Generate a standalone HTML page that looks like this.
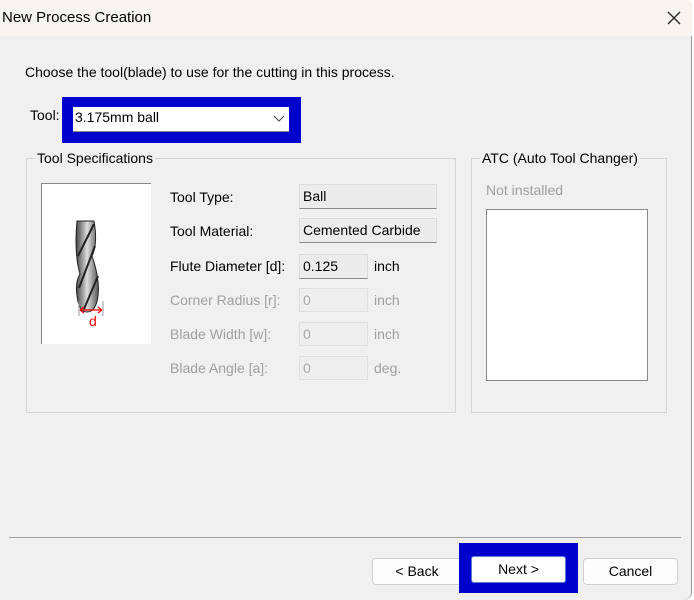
<!DOCTYPE html>
<html><head><meta charset="utf-8"><style>
*{margin:0;padding:0;box-sizing:border-box}
body{width:694px;height:600px;background:#fff;font-family:"Liberation Sans",sans-serif;font-size:14px;color:#000;position:relative;overflow:hidden;letter-spacing:0}
.win{position:absolute;left:0;top:0;width:692px;height:600px;background:#f0f0f0;border-right:1px solid #9a9a9a;border-radius:0 8px 8px 0}
.title{position:absolute;left:0;top:0;width:692px;height:36px;background:#f8f4f1;border-radius:0 8px 0 0}
.a{position:absolute;white-space:nowrap}
.grp{position:absolute;border:1px solid #d6d6d6}
.lbl{position:absolute;background:#f0f0f0;padding:0 2px;top:-9px;left:8px}
.f{position:absolute;background:#ececec;border:1px solid #dcdcdc;border-bottom:1px solid #8a8a8a;padding:3px 0 0 3px}
.fd{position:absolute;background:#efefef;border:1px solid #e0e0e0;color:#a8a8a8;padding:3px 0 0 3px}
.g{color:#a0a0a0}
.btn{position:absolute;background:#fdfdfd;border:1px solid #d0d0d0;border-radius:4px;text-align:center;line-height:25px;height:27px}
</style></head><body>
<div class="win">
<div class="title"><div class="a" style="left:2px;top:9px;font-size:15px">New Process Creation</div>
<svg class="a" style="left:667px;top:11px" width="14" height="14"><path d="M1 1L13 13M13 1L1 13" stroke="#222" stroke-width="1.3"/></svg></div>
<div class="a" style="left:25px;top:64px">Choose the tool(blade) to use for the cutting in this process.</div>
<div class="a" style="left:30px;top:107px">Tool:</div>
<div class="a" style="left:62px;top:97px;width:239px;height:46px;background:#0000cc"></div>
<div class="a" style="left:73px;top:107px;width:216px;height:25px;background:#fff;border-bottom:1px solid #888;padding:2px 0 0 2px">3.175mm ball
<svg class="a" style="left:200px;top:8px" width="12" height="8"><path d="M1 1L6 6L11 1" stroke="#555" fill="none" stroke-width="1.2"/></svg></div>

<div class="grp" style="left:26px;top:158px;width:430px;height:255px"><div class="lbl">Tool Specifications</div></div>
<div class="a" style="left:41px;top:183px;width:110px;height:161px;background:#fff;border-left:1px solid #888;border-top:1px solid #888">
<svg width="110" height="160" style="position:absolute;left:0;top:0">
<defs><linearGradient id="gr" x1="0" x2="1"><stop offset="0" stop-color="#444"/><stop offset="0.5" stop-color="#ddd"/><stop offset="1" stop-color="#555"/></linearGradient></defs>
<path d="M35 37H52Q56 60 50 72Q58 95 56 112Q54 128 45 128Q37 128 35 112Q33 98 38 90Q32 70 35 37Z" fill="url(#gr)" stroke="#222" stroke-width="1"/>
<path d="M52 40L36 72M53 62L37 104M56 92L42 125" stroke="#222" stroke-width="2" fill="none"/>
<path d="M37 117V132M61 117V132" stroke="#999"/>
<path d="M38 126H60M38 126l4-3M38 126l4 3M60 126l-4-3M60 126l-4 3" stroke="#e00" stroke-width="1.3" fill="none"/>
<text x="47" y="142" fill="#e00" font-size="14" font-family="Liberation Sans">d</text></svg></div>

<div class="a" style="left:170px;top:189px">Tool Type:</div>
<div class="a" style="left:170px;top:223px">Tool Material:</div>
<div class="a" style="left:170px;top:258px">Flute Diameter [d]:</div>
<div class="a g" style="left:170px;top:292px">Corner Radius [r]:</div>
<div class="a g" style="left:170px;top:326px">Blade Width [w]:</div>
<div class="a g" style="left:170px;top:360px">Blade Angle [a]:</div>
<div class="f" style="left:299px;top:184px;width:138px;height:25px">Ball</div>
<div class="f" style="left:299px;top:218px;width:138px;height:25px">Cemented Carbide</div>
<div class="f" style="left:299px;top:254px;width:69px;height:25px">0.125</div>
<div class="fd" style="left:299px;top:288px;width:69px;height:24px">0</div>
<div class="fd" style="left:299px;top:322px;width:69px;height:24px">0</div>
<div class="fd" style="left:299px;top:356px;width:69px;height:24px">0</div>
<div class="a" style="left:374px;top:258px">inch</div>
<div class="a g" style="left:374px;top:292px">inch</div>
<div class="a g" style="left:374px;top:326px">inch</div>
<div class="a g" style="left:374px;top:360px">deg.</div>

<div class="grp" style="left:471px;top:158px;width:196px;height:255px"><div class="lbl">ATC (Auto Tool Changer)</div></div>
<div class="a g" style="left:486px;top:182px">Not installed</div>
<div class="a" style="left:486px;top:209px;width:162px;height:172px;background:#fff;border:1px solid #8a8a8a"></div>

<div class="a" style="left:9px;top:537px;width:672px;height:1px;background:#a0a0a0"></div>
<div class="btn" style="left:372px;top:558px;width:90px">&lt; Back</div>
<div class="a" style="left:459px;top:543px;width:119px;height:50px;background:#0000cc"></div>
<div class="btn" style="left:471px;top:556px;width:95px;border-radius:3px;border:1px solid #5a7fd0;background:#fff">Next &gt;</div>
<div class="btn" style="left:583px;top:558px;width:95px">Cancel</div>
</div>
</body></html>
